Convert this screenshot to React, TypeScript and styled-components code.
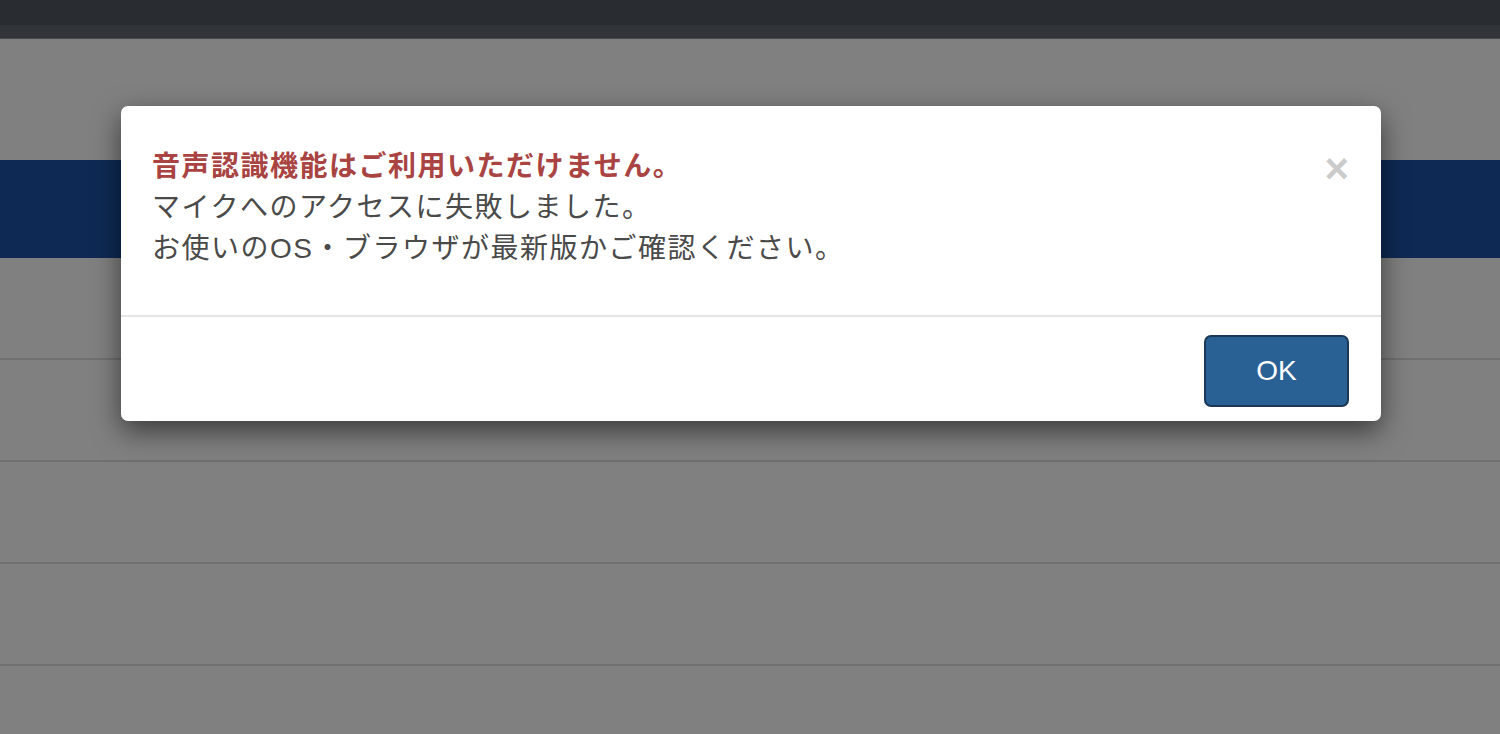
import styled, { createGlobalStyle } from "styled-components";

const GlobalStyle = createGlobalStyle`
  html, body {
    margin: 0;
    padding: 0;
    background: #808080;
  }
  body {
    font-family: "Liberation Sans", "Noto Sans CJK JP", sans-serif;
  }
`;

const Page = styled.div`
  position: relative;
  width: 1500px;
  height: 734px;
  overflow: hidden;
  background: #808080;
`;

const TopBar = styled.div`
  height: 25px;
  background: #292c30;
`;

const SubBar = styled.div`
  height: 13px;
  background: #313539;
  border-bottom: 1px solid #484b4d;
`;

const Spacer = styled.div`
  height: 121px;
`;

const Band = styled.div`
  height: 98px;
  background: #0e2a54;
`;

const Row = styled.div`
  height: 100px;
  border-bottom: 2px solid #707070;
`;

const Modal = styled.div`
  position: absolute;
  top: 106px;
  left: 121px;
  width: 1260px;
  background: #fff;
  border-radius: 7px;
  box-shadow: 0 10px 28px rgba(0, 0, 0, 0.55);
  display: flex;
  flex-direction: column;
`;

const ModalBody = styled.div`
  display: flex;
  justify-content: space-between;
  align-items: flex-start;
  padding: 40px 32px 46px 31px;
  border-bottom: 2px solid #e5e5e5;
`;

const Message = styled.div`
  font-size: 28px;
  line-height: 41px;
  letter-spacing: 1.5px;
  color: #4a4a4a;
`;

const Title = styled.div`
  color: #a94442;
  font-weight: 700;
`;

const CloseButton = styled.button`
  border: none;
  background: transparent;
  padding: 0;
  margin-top: 2px;
  font-family: "Liberation Sans", sans-serif;
  font-size: 42px;
  font-weight: 700;
  line-height: 42px;
  color: #000;
  opacity: 0.2;
`;

const Footer = styled.div`
  display: flex;
  justify-content: flex-end;
  padding: 18px 32px 14px 32px;
`;

const OkButton = styled.button`
  width: 145px;
  height: 72px;
  background: #2a6195;
  border: 2px solid #1b3856;
  border-radius: 7px;
  color: #fff;
  font-family: "Liberation Sans", sans-serif;
  font-size: 28px;
  line-height: 1;
`;

export default function App() {
  return (
    <Page>
      <GlobalStyle />
      <TopBar />
      <SubBar />
      <Spacer />
      <Band />
      <Row />
      <Row />
      <Row />
      <Row />
      <Row />
      <Modal>
        <ModalBody>
          <Message>
            <Title>音声認識機能はご利用いただけません。</Title>
            <div>マイクへのアクセスに失敗しました。</div>
            <div>お使いのOS・ブラウザが最新版かご確認ください。</div>
          </Message>
          <CloseButton>×</CloseButton>
        </ModalBody>
        <Footer>
          <OkButton>OK</OkButton>
        </Footer>
      </Modal>
    </Page>
  );
}
